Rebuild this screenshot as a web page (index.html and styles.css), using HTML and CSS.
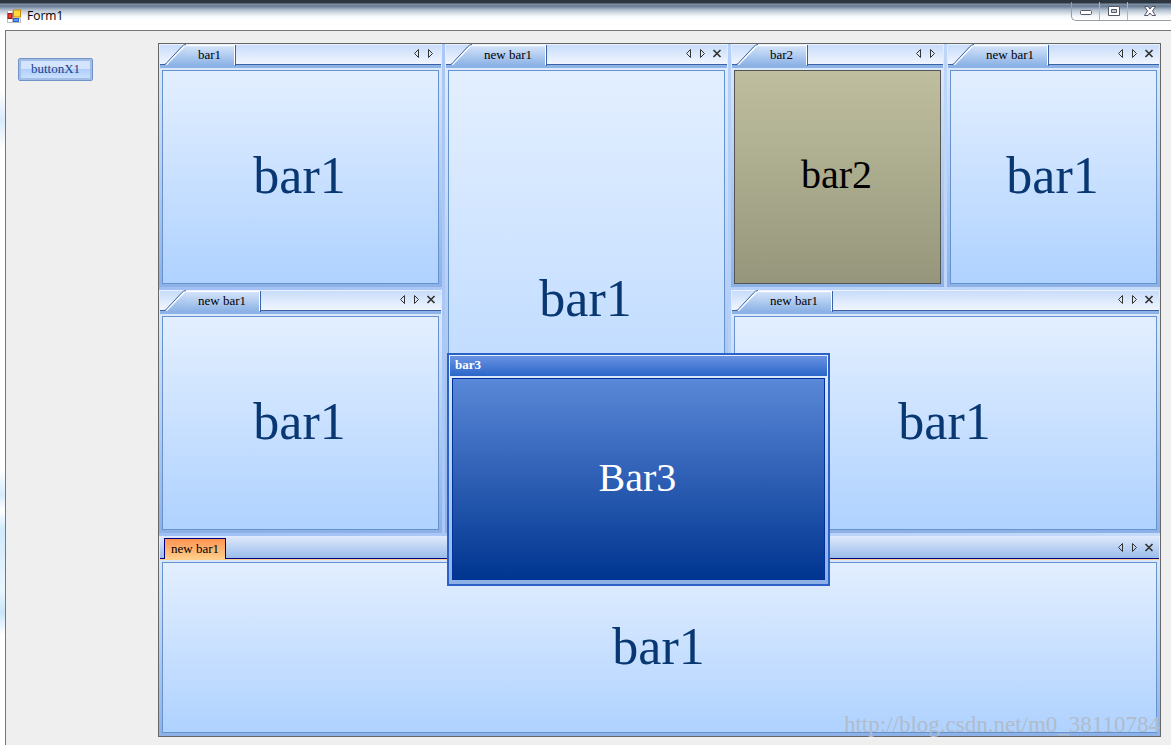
FILE: index.html
```html
<!DOCTYPE html>
<html lang="en">
<head>
<meta charset="utf-8">
<title>Form1</title>
<link rel="stylesheet" href="styles.css">
</head>
<body>
<svg class="symbols" aria-hidden="true">
  <symbol id="prev" viewBox="0 0 14 14"><path d="M8.500 2.500v8l-4-4z"/></symbol>
  <symbol id="next" viewBox="0 0 14 14"><path d="M4.500 2.500v8l4-4z"/></symbol>
  <symbol id="shut" viewBox="0 0 14 14"><path d="M3.500 3l7 7M10.500 3l-7 7" stroke-width="1.700"/></symbol>
  <symbol id="slope" viewBox="0 0 26 21">
    <path d="M5 21L22 3q2-2 4-2v20z" fill="url(#tabfill)"/>
    <path d="M6 21L23 3.500q1-2 3-2" fill="none" stroke="#fff" stroke-width="1.500"/>
    <path d="M0 20.500h4q2 0 3-2L21.500 3q2-2.500 4.500-2.500" fill="none" stroke="#3a62a5"/>
  </symbol>
  <linearGradient id="tabfill" x1="0" y1="0" x2="0" y2="1"><stop offset="0" stop-color="#d4e4fa"/><stop offset="1" stop-color="#8db3e6"/></linearGradient>
</svg>

<header class="titlebar">
  <svg class="app-icon" viewBox="0 0 14 14" aria-hidden="true">
    <path d="M.5 1.500h5v12h-5zM5.500 9.500h8v4h-8z" fill="#fff" stroke="#bbb"/>
    <rect x="6.500" y="1" width="7" height="7" fill="#ffd83c" stroke="#c78a00"/>
    <rect x="1" y="4.500" width="4" height="5" fill="#e0402c" stroke="#a01010"/>
    <rect x="6.500" y="9.500" width="5" height="3" fill="#5a9cf8" stroke="#2861cf"/>
  </svg>
  <h1 class="title">Form1</h1>
  <div class="controls">
    <button class="control" aria-label="Minimize"><svg viewBox="0 0 14 12"><rect x="1.500" y="5.500" width="11" height="4" rx="1" fill="#fff" stroke="#535666"/></svg></button>
    <button class="control" aria-label="Maximize"><svg viewBox="0 0 14 12"><path d="M1.500 1.500h11v9h-11zM4.500 4.500v3h5v-3z" fill="#fff" fill-rule="evenodd" stroke="#535666"/></svg></button>
    <button class="control control-close" aria-label="Close"><svg viewBox="0 0 14 12"><path d="M1.500 1.500h3.500l2 2.500 2-2.500h3.500L9.500 6l3 4.500H9L7 8l-2 2.500H1.500L4.500 6z" fill="#fff" stroke="#535666"/></svg></button>
  </div>
</header>

<main class="form">
  <aside class="side"><button class="buttonx">buttonX1</button></aside>
  <div class="dock">
    <div class="upper">
      <div class="stack">
        <section class="bar">
          <div class="strip"><button class="tab"><svg class="slope"><use href="#slope"/></svg><span>bar1</span></button>
            <div class="tools"><button class="tool" aria-label="Previous"><svg><use href="#prev"/></svg></button><button class="tool" aria-label="Next"><svg><use href="#next"/></svg></button></div></div>
          <div class="content">bar1</div>
        </section>
        <section class="bar">
          <div class="strip"><button class="tab"><svg class="slope"><use href="#slope"/></svg><span>new bar1</span></button>
            <div class="tools"><button class="tool" aria-label="Previous"><svg><use href="#prev"/></svg></button><button class="tool" aria-label="Next"><svg><use href="#next"/></svg></button><button class="tool" aria-label="Close"><svg><use href="#shut"/></svg></button></div></div>
          <div class="content">bar1</div>
        </section>
      </div>
      <section class="bar">
        <div class="strip"><button class="tab"><svg class="slope"><use href="#slope"/></svg><span>new bar1</span></button>
          <div class="tools"><button class="tool" aria-label="Previous"><svg><use href="#prev"/></svg></button><button class="tool" aria-label="Next"><svg><use href="#next"/></svg></button><button class="tool" aria-label="Close"><svg><use href="#shut"/></svg></button></div></div>
        <div class="content">bar1</div>
      </section>
      <div class="stack">
        <div class="pair">
          <section class="bar">
            <div class="strip"><button class="tab"><svg class="slope"><use href="#slope"/></svg><span>bar2</span></button>
              <div class="tools"><button class="tool" aria-label="Previous"><svg><use href="#prev"/></svg></button><button class="tool" aria-label="Next"><svg><use href="#next"/></svg></button></div></div>
            <div class="content content-olive">bar2</div>
          </section>
          <section class="bar">
            <div class="strip"><button class="tab"><svg class="slope"><use href="#slope"/></svg><span>new bar1</span></button>
              <div class="tools"><button class="tool" aria-label="Previous"><svg><use href="#prev"/></svg></button><button class="tool" aria-label="Next"><svg><use href="#next"/></svg></button><button class="tool" aria-label="Close"><svg><use href="#shut"/></svg></button></div></div>
            <div class="content">bar1</div>
          </section>
        </div>
        <section class="bar">
          <div class="strip"><button class="tab"><svg class="slope"><use href="#slope"/></svg><span>new bar1</span></button>
            <div class="tools"><button class="tool" aria-label="Previous"><svg><use href="#prev"/></svg></button><button class="tool" aria-label="Next"><svg><use href="#next"/></svg></button><button class="tool" aria-label="Close"><svg><use href="#shut"/></svg></button></div></div>
          <div class="content">bar1</div>
        </section>
      </div>
    </div>
    <section class="bar">
      <div class="strip strip-active"><button class="tab-active">new bar1</button>
        <div class="tools"><button class="tool" aria-label="Previous"><svg><use href="#prev"/></svg></button><button class="tool" aria-label="Next"><svg><use href="#next"/></svg></button><button class="tool" aria-label="Close"><svg><use href="#shut"/></svg></button></div></div>
      <div class="content">bar1</div>
    </section>
    <section class="floating">
      <h2 class="floating-title">bar3</h2>
      <div class="floating-content">Bar3</div>
    </section>
    <div class="watermark">http://blog.csdn.net/m0_38110784</div>
  </div>
</main>
</body>
</html>
```

FILE: styles.css
```css
* { box-sizing: border-box; }

body {
  margin: 0;
  min-height: 100vh;
  display: flex;
  flex-direction: column;
  padding-left: 5px;
  background: linear-gradient(#fff 0 90px, #d8ebfb 120px, #fff 150px 470px, #d4ecfc 495px, #fff 510px, #d0eafc 530px, #eaf6fd 590px, #c9e5fa 612px, #fff 635px);
  font: 13px/16px "Liberation Serif", serif;
  color: #000;
}

button {
  margin: 0;
  padding: 0;
  border: 0;
  background: none;
  font: inherit;
  color: inherit;
}

svg { display: block; }
.symbols { position: absolute; width: 0; height: 0; }

.titlebar {
  display: flex;
  height: 30px;
  margin-left: -5px;
  padding-left: 7px;
  background: linear-gradient(#2d3640 0 3px, #8797ab 4px, #66788f 6px, #b3c0cf 10px, #f4f7fa 16px, #fff 20px);
}

.app-icon { width: 14px; height: 14px; margin-top: 9px; }
.title { margin: 8px 0 0 6px; font: 12px/16px "Open Sans", sans-serif; }

.controls {
  display: flex;
  height: 19px;
  margin: 2px 0 0 auto;
  border: 1px solid #9a9da3;
  border-width: 0 0 1px 1px;
  border-radius: 0 0 0 5px;
}

.control {
  display: grid;
  place-items: center;
  width: 28px;
  border-right: 1px solid #b0b4ba;
}
.control svg { width: 14px; height: 12px; }
.control-close { width: 43px; border-right: 0; }

.form {
  flex: 1;
  display: flex;
  padding: 12px 10px 8px 0;
  border: 1px solid #777;
  border-width: 1px 0 0 1px;
  background: #efefef;
}

.side { flex: 0 0 152px; padding: 15px 12px; }

.buttonx {
  display: block;
  width: 75px;
  height: 23px;
  padding-bottom: 2px;
  border: 1px solid #7094c8;
  border-radius: 2px;
  box-shadow: inset 0 0 0 2px #a3bee6;
  background: linear-gradient(#d3e4fc 0 45%, #aecffd 50%, #cfe3ff);
  color: #15428b;
}

.dock {
  flex: 1;
  position: relative;
  display: grid;
  grid-template-rows: 489fr 200fr;
  gap: 3px;
  border: 1px solid #666;
  background: linear-gradient(90deg, #9fbff5, #c5dcfb);
}

.upper { display: grid; grid-template-columns: 283fr 283fr 429fr; gap: 3px; }
.stack { display: grid; grid-template-rows: 1fr 1fr; gap: 3px; }
.pair { display: grid; grid-template-columns: 1fr 1fr; gap: 3px; }

.bar {
  display: flex;
  flex-direction: column;
  padding: 0 3px 3px;
  background: linear-gradient(#e3eefd, #8db1e6);
}

.strip {
  display: flex;
  align-items: stretch;
  height: 24px;
  margin: 0 -2px 2px;
  border-top: 1px solid #eaf2fe;
  border-bottom: 3px solid #8db3e6;
  background: linear-gradient(#3a62a5, #3a62a5) bottom / 100% 1px no-repeat, linear-gradient(#c8dcfa, #f3f7ff);
}

.tab {
  display: flex;
  height: 21px;
  border-right: 1px solid #3a62a5;
}
.slope { width: 26px; height: 21px; margin-top: -1px; }
.tab span {
  height: 20px;
  padding: 1px 13px 2px 12px;
  border: 1px solid #fff;
  border-width: 1px 1px 0 0;
  background: linear-gradient(#d4e4fa, #8db3e6);
}

.tools { display: flex; margin: 2px 3px 0 auto; }
.tool { width: 14px; height: 14px; }
.tool svg {
  width: 14px;
  height: 14px;
  fill: none;
  stroke: #333;
}

.strip-active {
  border-top: 0;
  border-bottom: 1px solid #ffcf8b;
  background: linear-gradient(#00008b, #00008b) bottom / 100% 1px no-repeat, linear-gradient(#dfeafd, #98bae9);
}
.strip-active .tools { margin-top: 5px; }
.tab-active {
  margin: 2px 0 0 4px;
  padding: 0 6px;
  border: 1px solid #00008b;
  border-bottom: 0;
  background: linear-gradient(#ff9450, #ffcf8b);
}

.content {
  flex: 1;
  display: grid;
  place-items: center;
  padding: 0 2px 2px 0;
  border: 1px solid #6593cf;
  background: linear-gradient(#e3efff, #afd2ff);
  color: #083772;
  font-size: 52px;
  line-height: 60px;
}
.content-olive {
  padding-bottom: 4px;
  border-color: #555;
  background: linear-gradient(#bfbf9f, #96967c);
  color: #000;
  font-size: 40px;
}

.floating {
  position: absolute;
  left: 288px;
  top: 309px;
  width: 383px;
  height: 233px;
  display: flex;
  flex-direction: column;
  padding: 1px 3px 4px;
  border: 2px solid #2a62c8;
  background: linear-gradient(#e3eefd, #8db1e6);
}
.floating-title {
  height: 20px;
  margin: 0 -2px 2px;
  padding: 1px 5px;
  background: linear-gradient(#6a93e2, #2a66c9);
  color: #fff;
  font: bold 13px/16px "Liberation Serif", serif;
}
.floating-content {
  flex: 1;
  display: grid;
  place-items: center;
  padding: 0 2px 2px 0;
  border: 1px solid #00309c;
  background: linear-gradient(#5a88d8, #003590);
  color: #fff;
  font-size: 40px;
  line-height: 48px;
}

.watermark {
  position: absolute;
  right: 0;
  bottom: 0;
  color: #b0bccb;
  font-size: 23px;
  line-height: 22px;
}
```
